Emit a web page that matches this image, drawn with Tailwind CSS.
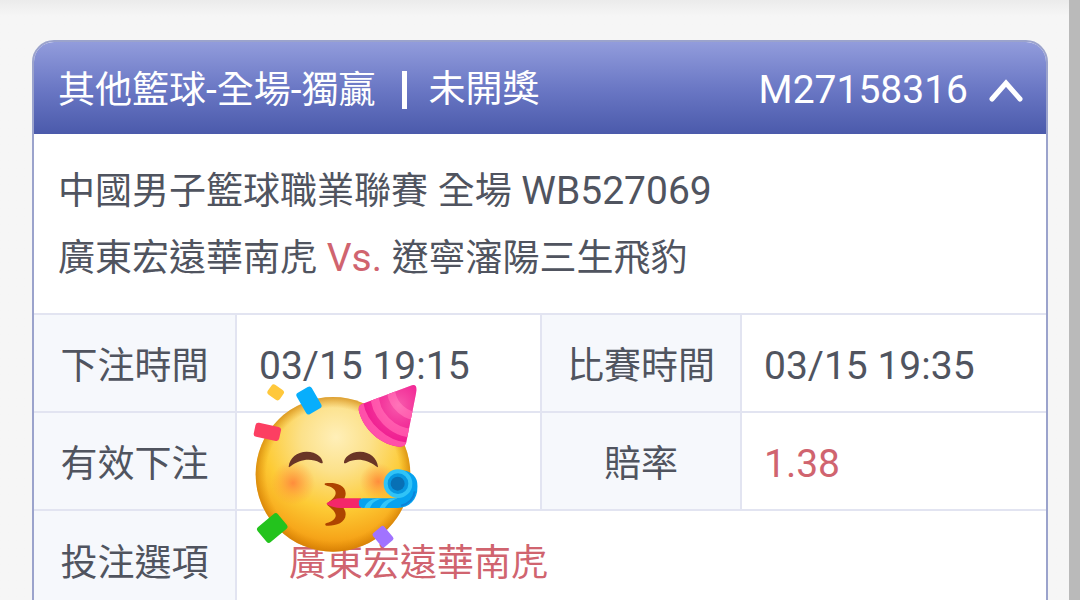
<!DOCTYPE html>
<html lang="zh-Hant">

<head>
  <meta charset="UTF-8">
  <meta name="viewport" content="width=device-width, initial-scale=1.0">
  <title>注單明細</title>
  <script src="https://cdn.jsdelivr.net/npm/@tailwindcss/browser@4"></script>
</head>

<body class="bg-[#f6f6f6] h-screen overflow-hidden flex font-[Roboto,'Noto_Sans_CJK_TC',sans-serif] text-[37px] text-[#50545f]">
  <main class="flex-1 pl-8 pr-[21px] pb-8 bg-linear-to-b from-[#ebebeb] to-[#f6f6f6] to-[16px]">

    <!-- Bet card -->
    <section class="mt-10 bg-white border-2 border-[#9ba3cc] rounded-t-[22px] overflow-hidden">
      <header class="h-[92px] pl-6 pr-[22px] flex items-center justify-between text-white bg-linear-to-b from-[#929cdc] via-[#6b78c5] to-[#4b5aab]">
        <h1 class="pt-1 flex items-center">
          <span>其他籃球<span class="text-[39px]">-</span>全場<span class="text-[39px]">-</span>獨贏</span>
          <span class="w-[5px] h-[38px] ml-[26px] mr-[22px] bg-white"></span>
          <span>未開獎</span>
        </h1>
        <div class="pt-1 flex items-center gap-5">
          <span class="text-[39px]">M27158316</span>
          <button type="button" id="toggle" aria-label="收合" aria-expanded="true" aria-controls="detail" onclick="toggleDetail()">
            <svg class="w-9 h-6" viewBox="0 0 36 24" fill="none" stroke="#fff" stroke-width="5" stroke-linecap="round">
              <path d="M4 21 18 5 32 21" />
            </svg>
          </button>
        </div>
      </header>

      <div id="detail">
        <!-- Match info -->
        <div class="h-[179px] px-6 pt-6 leading-[67px] text-[39px]">
          <p><span class="text-[37px]">中國男子籃球職業聯賽</span> <span class="text-[37px]">全場</span> WB527069</p>
          <p><span class="text-[37px]">廣東宏遠華南虎</span> <span class="text-[#d0646f]">Vs.</span> <span class="text-[37px]">遼寧瀋陽三生飛豹</span></p>
        </div>

        <!-- Bet details -->
        <table class="w-full table-fixed text-left">
          <colgroup>
            <col class="w-[202px]">
            <col>
            <col class="w-[200px]">
            <col>
          </colgroup>
          <tbody>
            <tr class="h-[98px] border-t-2 border-[#e2e4f1]">
              <th scope="row" class="pt-2 bg-[#f6f8fc] border-r-2 border-[#e2e4f1] font-normal text-center">下注時間</th>
              <td class="pt-[6px] pl-[22px] text-[39px]">03/15 19:15</td>
              <th scope="row" class="pt-2 bg-[#f6f8fc] border-x-2 border-[#e2e4f1] font-normal text-center">比賽時間</th>
              <td class="pt-[6px] pl-[22px] text-[39px]">03/15 19:35</td>
            </tr>
            <tr class="h-[98px] border-t-2 border-[#e2e4f1]">
              <th scope="row" class="pt-2 bg-[#f6f8fc] border-r-2 border-[#e2e4f1] font-normal text-center">有效下注</th>
              <td class="relative">
                <!-- Party face sticker -->
                <svg class="absolute -top-[30px] left-4 w-[166px] h-[170px]" viewBox="40 40 498 510" role="img" aria-label="派對臉">
                  <defs>
                    <radialGradient id="face" cx=".52" cy=".26" r=".75">
                      <stop offset="0" stop-color="#ffefb8" />
                      <stop offset=".3" stop-color="#fce18a" />
                      <stop offset=".62" stop-color="#fdcb35" />
                      <stop offset=".86" stop-color="#f7a81b" />
                      <stop offset="1" stop-color="#ec8f0c" />
                    </radialGradient>
                    <radialGradient id="edge">
                      <stop offset=".86" stop-color="#d98600" stop-opacity="0" />
                      <stop offset="1" stop-color="#c77400" stop-opacity=".6" />
                    </radialGradient>
                    <radialGradient id="cheek">
                      <stop offset="0" stop-color="#ff853a" stop-opacity=".9" />
                      <stop offset="1" stop-color="#ff9a3c" stop-opacity="0" />
                    </radialGradient>
                    <radialGradient id="hatShine" cx=".65" cy=".35" r=".6">
                      <stop offset="0" stop-color="#ff8cc3" stop-opacity=".6" />
                      <stop offset="1" stop-color="#ff4fa8" stop-opacity="0" />
                    </radialGradient>
                    <clipPath id="hat">
                      <path d="M513 48q18-7 18 13L500 218q-4 14-20 13C426 228 370 180 357 122q-2-15 12-20Z" />
                    </clipPath>
                    <clipPath id="tube">
                      <path d="M357 400q0-14 14-14h91c25 0 41-12 39-40-1-17-5-30-12-44 28 3 45 21 45 48 0 42-26 65-60 65H371q-14 0-14-15Z" />
                    </clipPath>
                  </defs>
                  <circle cx="280" cy="314" r="232" fill="url(#face)" />
                  <circle cx="280" cy="314" r="232" fill="url(#edge)" />
                  <circle cx="160" cy="340" r="66" fill="url(#cheek)" />
                  <circle cx="416" cy="336" r="56" fill="url(#cheek)" />
                  <g fill="#6a3526">
                    <path d="M147 291c3-26 24-45 54-45 31 0 47 19 48 31 1 6-4 4-8 2-30-16-64-8-88 11-4 3-6 3-6 1Z" />
                    <path d="M415 291c-3-26-24-45-54-45-31 0-47 19-48 31-1 6 4 4 8 2 30-16 64-8 88 11 4 3 6 3 6 1Z" />
                  </g>
                  <path d="M257 341c20-4 61 0 61 30 0 14-8 25-20 33 13 8 20 17 20 30 0 28-35 36-58 34-5-1-4-7 1-8 19-5 31-16 26-28-3-9-11-15-24-26v-6c15-11 25-19 25-30 0-12-13-18-30-23-4-2-4-5-1-6Z" fill="#ae4400" />
                  <path d="M262 400c14-9 25-14 40-14h62v29h-62c-15 0-26-3-40-11q-3-2 0-4Z" fill="#f4276a" />
                  <g clip-path="url(#tube)">
                    <path d="M350 290h190v130H350Z" fill="#06a2ef" />
                    <path d="M374 415c8-18 16-24 38-29h15c-23 8-30 14-36 29ZM420 415c10-18 20-25 40-29h14c-20 8-29 14-38 29Z" fill="#32c6fa" />
                    <path d="M484 408c24-6 38-20 41-43" fill="none" stroke="#0c83d8" stroke-width="6" />
                  </g>
                  <circle cx="475" cy="342" r="37" fill="#0797e1" stroke="#30c3f7" stroke-width="12" />
                  <circle cx="474" cy="342" r="21" fill="#0870b5" />
                  <g clip-path="url(#hat)">
                    <path d="M340 30h210v220H340Z" fill="#ed168d" />
                    <g fill="none" stroke="#ff4fa9" stroke-width="25">
                      <path d="M454 54c-2 35 25 79 78 87" />
                      <path d="M405 72c-2 60 52 119 120 119" />
                      <path d="M358 99c12 71 80 127 142 132" />
                    </g>
                    <path d="M340 30h210v220H340Z" fill="url(#hatShine)" />
                  </g>
                  <rect x="86" y="50" width="44" height="36" rx="9" transform="rotate(35 108 68)" fill="#ffc83b" />
                  <rect x="182" y="56" width="52" height="74" rx="9" transform="rotate(-30 207 93)" fill="#08aefc" />
                  <rect x="44" y="165" width="78" height="43" rx="9" transform="rotate(12 83 187)" fill="#fc3f62" />
                  <rect x="58" y="446" width="79" height="59" rx="9" transform="rotate(-40 97 475)" fill="#23c31d" />
                  <rect x="408" y="474" width="44" height="54" rx="7" transform="rotate(-40 430 501)" fill="#a173ff" />
                </svg>
              </td>
              <th scope="row" class="pt-2 bg-[#f6f8fc] border-x-2 border-[#e2e4f1] font-normal text-center">賠率</th>
              <td class="pt-[6px] pl-[22px] text-[39px] text-[#d0646f]">1.38</td>
            </tr>
            <tr class="h-[98px] border-t-2 border-[#e2e4f1]">
              <th scope="row" class="pt-2 bg-[#f6f8fc] border-r-2 border-[#e2e4f1] font-normal text-center">投注選項</th>
              <td colspan="3" class="pt-2 pl-[52px] text-[#d0646f]">廣東宏遠華南虎</td>
            </tr>
          </tbody>
        </table>
      </div>
    </section>
  </main>

  <!-- Scroll track -->
  <div class="w-[11px] bg-[#bababa]"></div>

  <script>
    function toggleDetail() {
      const detail = document.getElementById('detail');
      const toggle = document.getElementById('toggle');

      const closed = detail.classList.toggle('hidden');
      toggle.classList.toggle('rotate-180', closed);
      toggle.setAttribute('aria-expanded', String(!closed));
    }
  </script>
</body>

</html>
